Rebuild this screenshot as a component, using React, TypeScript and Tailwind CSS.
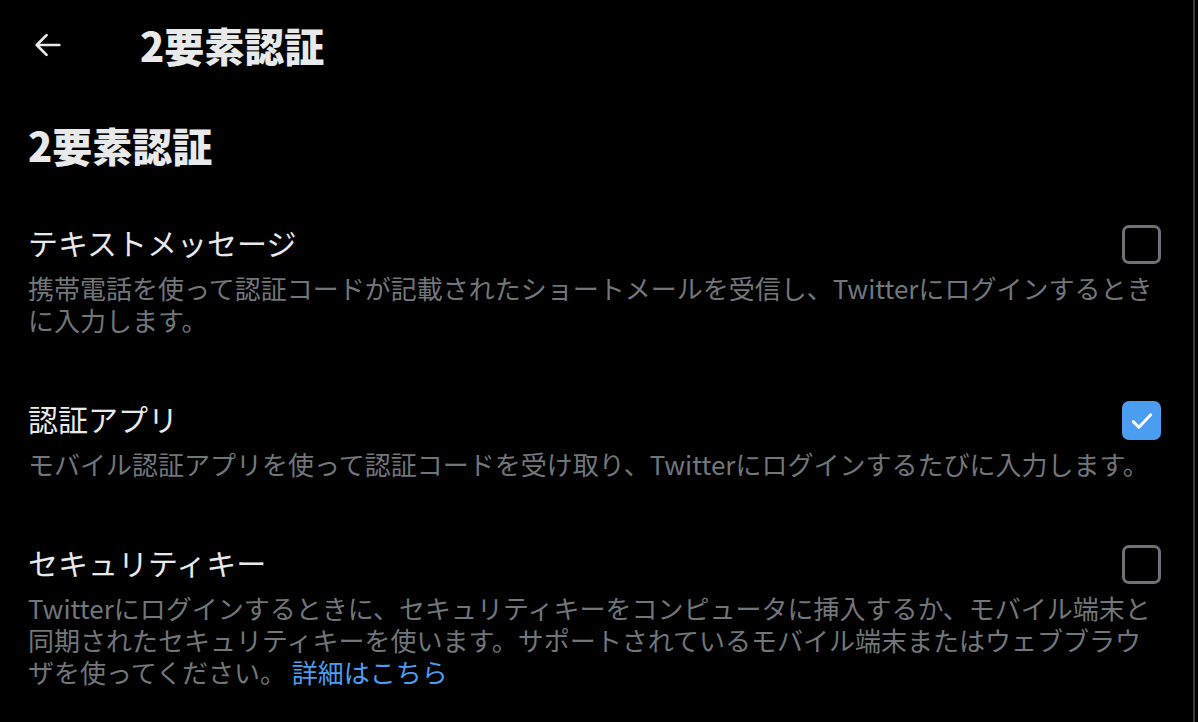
import React, { useState } from 'react';

interface Option {
  id: string;
  title: string;
  description: React.ReactNode;
}

const options: Option[] = [
  {
    id: 'sms',
    title: 'テキストメッセージ',
    description:
      '携帯電話を使って認証コードが記載されたショートメールを受信し、Twitterにログインするときに入力します。',
  },
  {
    id: 'app',
    title: '認証アプリ',
    description:
      'モバイル認証アプリを使って認証コードを受け取り、Twitterにログインするたびに入力します。',
  },
  {
    id: 'key',
    title: 'セキュリティキー',
    description: (
      <>
        Twitterにログインするときに、セキュリティキーをコンピュータに挿入するか、モバイル端末と同期されたセキュリティキーを使います。サポートされているモバイル端末またはウェブブラウザを使ってください。{' '}
        <a href="#" className="text-[#4a9df0]">
          詳細はこちら
        </a>
      </>
    ),
  },
];

const Checkbox: React.FC<{ checked: boolean; onChange: () => void }> = ({ checked, onChange }) => (
  <button
    type="button"
    onClick={onChange}
    className={`w-[39px] h-[39px] rounded-[7px] flex items-center justify-center shrink-0 ${
      checked ? 'bg-[#4a9df0]' : 'border-[3px] border-[#6e7276]'
    }`}
  >
    {checked && (
      <svg width="30" height="30" viewBox="0 0 24 24" fill="none">
        <path d="M5 12.5l4.5 4.5L19 7" stroke="white" strokeWidth="2.3" strokeLinecap="round" strokeLinejoin="round" />
      </svg>
    )}
  </button>
);

export default function App() {
  const [checked, setChecked] = useState<Record<string, boolean>>({ sms: false, app: true, key: false });

  return (
    <div
      className="w-[1198px] h-[722px] bg-black flex overflow-hidden"
      style={{ fontFamily: '"Noto Sans CJK JP", "Noto Sans", sans-serif' }}
    >
      <div className="w-[1195px] border-r-2 border-[#3a3b3c] flex flex-col">
        {/* ヘッダー */}
        <div className="h-[90px] flex items-center">
          <button type="button" className="w-[96px] pl-[31px] h-full flex items-center text-[#e7e9ea]">
            <svg width="34" height="34" viewBox="0 0 24 24" fill="none">
              <path d="M20 12H4.5M11 5l-7 7 7 7" stroke="currentColor" strokeWidth="1.9" strokeLinecap="round" strokeLinejoin="round" />
            </svg>
          </button>
          <h1 className="ml-[44px] text-[40px] font-black text-[#e7e9ea] leading-none">2要素認証</h1>
        </div>

        <div className="pl-[28px] pr-[32px]">
          <h2 className="mt-[30px] h-[50px] flex items-center text-[40px] font-black text-[#e7e9ea] leading-none">
            2要素認証
          </h2>

          <div className="mt-[50px] flex flex-col gap-[60px]">
            {options.map((o) => (
              <div key={o.id} className="flex flex-col">
                <div className="h-[44px] flex items-center justify-between">
                  <span className="text-[30px] text-[#e7e9ea] leading-[44px]">{o.title}</span>
                  <div className="pt-[5px]">
                    <Checkbox
                      checked={!!checked[o.id]}
                      onChange={() => setChecked((c) => ({ ...c, [o.id]: !c[o.id] }))}
                    />
                  </div>
                </div>
                <p className="mt-[8px] text-[26px] leading-[32px] text-[#71767b]">{o.description}</p>
              </div>
            ))}
          </div>
        </div>
      </div>
    </div>
  );
}
